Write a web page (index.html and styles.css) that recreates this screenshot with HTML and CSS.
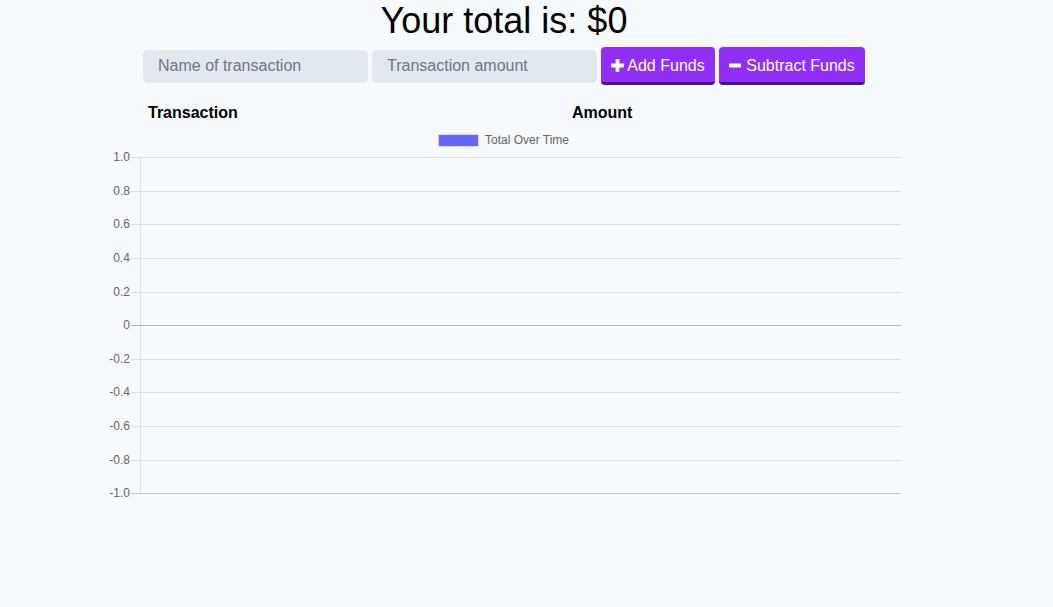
FILE: index.html
```html
<!DOCTYPE html>
<html lang="en">
<head>
<meta charset="utf-8">
<title>Budget Tracker</title>
<link rel="stylesheet" href="styles.css">
</head>
<body>
<div class="page">
  <h1 class="total">Your total is: $<span>0</span></h1>
  <div class="form">
    <input class="field" type="text" placeholder="Name of transaction">
    <input class="field" type="number" placeholder="Transaction amount">
    <button class="btn btn-add"><svg class="ico" width="13" height="13" viewBox="0 0 13 13"><rect x="4.6" y="0" width="3.8" height="13" rx="0.8" fill="#fff"/><rect x="0" y="4.6" width="13" height="3.8" rx="0.8" fill="#fff"/></svg>Add Funds</button>
    <button class="btn btn-sub"><svg class="ico" width="12" height="13" viewBox="0 0 12 13"><rect x="0" y="4.6" width="12" height="3.8" rx="0.8" fill="#fff"/></svg>Subtract Funds</button>
  </div>
  <div class="thead">
    <div class="th">Transaction</div>
    <div class="th">Amount</div>
  </div>
  <svg class="chart" width="810" height="372" viewBox="0 0 810 372">
    <rect x="338.5" y="6.5" width="40" height="12" fill="#6666ff" stroke="#d6d6ff" stroke-width="1"/>
    <text x="385" y="16" class="legend">Total Over Time</text>
    <g stroke="#dcdfe1" stroke-width="1">
      <line x1="31" x2="801" y1="29.5" y2="29.5"/>
      <line x1="31" x2="801" y1="63.5" y2="63.5"/>
      <line x1="31" x2="801" y1="96.5" y2="96.5"/>
      <line x1="31" x2="801" y1="130.5" y2="130.5"/>
      <line x1="31" x2="801" y1="164.5" y2="164.5"/>
      <line x1="31" x2="801" y1="231.5" y2="231.5"/>
      <line x1="31" x2="801" y1="264.5" y2="264.5"/>
      <line x1="31" x2="801" y1="298.5" y2="298.5"/>
      <line x1="31" x2="801" y1="332.5" y2="332.5"/>
      <line x1="40.5" x2="40.5" y1="29" y2="366"/>
    </g>
    <line x1="31" x2="801" y1="197.5" y2="197.5" stroke="#b4b6b8" stroke-width="1"/>
    <line x1="31" x2="801" y1="365.5" y2="365.5" stroke="#c6c8ca" stroke-width="1"/>
    <g class="tick">
      <text x="30" y="33">1.0</text>
      <text x="30" y="67">0.8</text>
      <text x="30" y="100">0.6</text>
      <text x="30" y="134">0.4</text>
      <text x="30" y="168">0.2</text>
      <text x="30" y="201">0</text>
      <text x="30" y="235">-0.2</text>
      <text x="30" y="268">-0.4</text>
      <text x="30" y="302">-0.6</text>
      <text x="30" y="336">-0.8</text>
      <text x="30" y="369">-1.0</text>
    </g>
  </svg>
</div>
</body>
</html>
```
FILE: styles.css
```css
html, body {
  margin: 0;
  padding: 0;
  background: #f7fafc;
  font-family: "Liberation Sans", Arial, sans-serif;
  color: #000;
}
.page {
  width: 992px;
  margin-left: 8px;
  display: flex;
  flex-direction: column;
  align-items: center;
}
.total {
  margin: 0;
  padding-top: 1px;
  font-size: 36px;
  line-height: 40px;
  font-weight: 400;
  text-align: center;
}
.form {
  margin-top: 6px;
  display: flex;
  align-items: center;
  gap: 4px;
}
.field {
  width: 225px;
  height: 33px;
  box-sizing: border-box;
  border: none;
  border-radius: 5px;
  background: #e2e8f0;
  padding: 0 15px;
  font-family: "Liberation Sans", Arial, sans-serif;
  font-size: 16px;
  color: #333;
  outline: none;
}
.field::placeholder {
  color: #707784;
}
.field::-webkit-inner-spin-button { -webkit-appearance: none; }
.btn {
  display: flex;
  align-items: center;
  justify-content: center;
  white-space: nowrap;
  height: 38px;
  box-sizing: border-box;
  padding: 1px 0 0 0;
  border: none;
  border-bottom: 3px solid #4c1185;
  border-radius: 4px;
  background: #912ff6;
  color: #fff;
  font-family: "Liberation Sans", Arial, sans-serif;
  font-size: 16px;
  line-height: 19px;
  cursor: pointer;
}
.btn-add { width: 114px; gap: 3px; }
.btn-sub { width: 146px; gap: 5px; }
.ico { flex: none; }
.thead {
  margin-top: 18px;
  width: 722px;
  display: grid;
  grid-template-columns: 424px 1fr;
  padding-left: 5px;
  box-sizing: border-box;
}
.th {
  font-weight: 700;
  font-size: 16px;
  line-height: 19px;
}
.chart {
  display: block;
  margin-top: 6px;
  margin-left: 2px;
  overflow: visible;
}
.legend {
  font-family: "Liberation Sans", Arial, sans-serif;
  font-size: 12px;
  fill: #666;
}
.tick text {
  font-family: "Liberation Sans", Arial, sans-serif;
  font-size: 12px;
  fill: #666;
  text-anchor: end;
}
```
